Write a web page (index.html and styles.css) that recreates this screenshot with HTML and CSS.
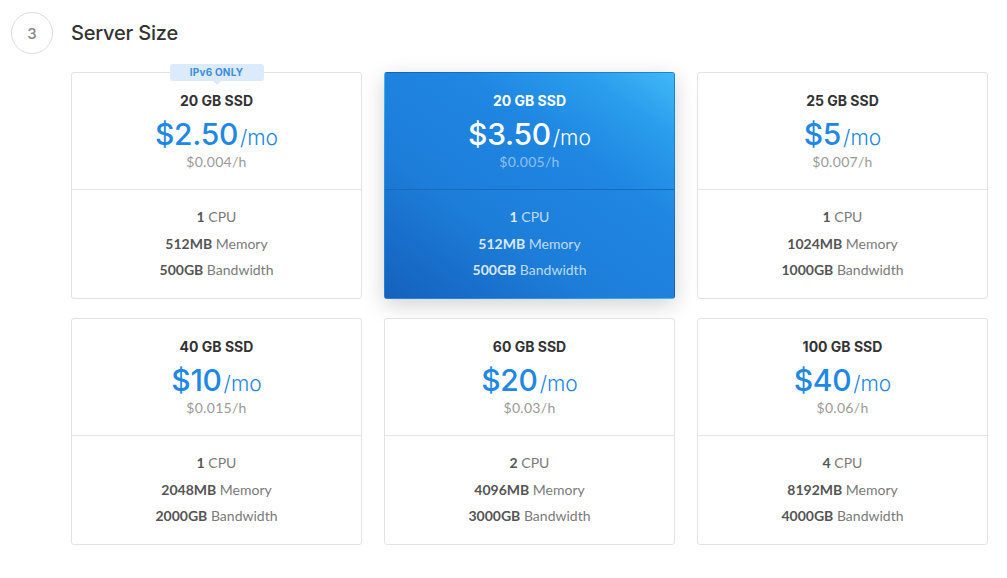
FILE: index.html
```html
<!DOCTYPE html>
<html>
<head>
<meta charset="utf-8">
<link rel="stylesheet" href="styles.css">
</head>
<body>
<section class="step">
  <header class="step-head">
    <div class="step-num">3</div>
    <h2 class="step-title">Server Size</h2>
  </header>
  <div class="plans">
    <div class="plan">
      <span class="badge">IPv6 ONLY</span>
      <div class="plan-top">
        <div class="plan-disk">20 GB SSD</div>
        <div class="plan-price"><span class="amt">$2.50</span><span class="per">/mo</span></div>
        <div class="plan-hour">$0.004/h</div>
      </div>
      <ul class="plan-specs">
        <li><b>1</b> CPU</li>
        <li><b>512MB</b> Memory</li>
        <li><b>500GB</b> Bandwidth</li>
      </ul>
    </div>
    <div class="plan selected">
      <div class="plan-top">
        <div class="plan-disk">20 GB SSD</div>
        <div class="plan-price"><span class="amt">$3.50</span><span class="per">/mo</span></div>
        <div class="plan-hour">$0.005/h</div>
      </div>
      <ul class="plan-specs">
        <li><b>1</b> CPU</li>
        <li><b>512MB</b> Memory</li>
        <li><b>500GB</b> Bandwidth</li>
      </ul>
    </div>
    <div class="plan">
      <div class="plan-top">
        <div class="plan-disk">25 GB SSD</div>
        <div class="plan-price"><span class="amt">$5</span><span class="per">/mo</span></div>
        <div class="plan-hour">$0.007/h</div>
      </div>
      <ul class="plan-specs">
        <li><b>1</b> CPU</li>
        <li><b>1024MB</b> Memory</li>
        <li><b>1000GB</b> Bandwidth</li>
      </ul>
    </div>
    <div class="plan">
      <div class="plan-top">
        <div class="plan-disk">40 GB SSD</div>
        <div class="plan-price"><span class="amt">$10</span><span class="per">/mo</span></div>
        <div class="plan-hour">$0.015/h</div>
      </div>
      <ul class="plan-specs">
        <li><b>1</b> CPU</li>
        <li><b>2048MB</b> Memory</li>
        <li><b>2000GB</b> Bandwidth</li>
      </ul>
    </div>
    <div class="plan">
      <div class="plan-top">
        <div class="plan-disk">60 GB SSD</div>
        <div class="plan-price"><span class="amt">$20</span><span class="per">/mo</span></div>
        <div class="plan-hour">$0.03/h</div>
      </div>
      <ul class="plan-specs">
        <li><b>2</b> CPU</li>
        <li><b>4096MB</b> Memory</li>
        <li><b>3000GB</b> Bandwidth</li>
      </ul>
    </div>
    <div class="plan">
      <div class="plan-top">
        <div class="plan-disk">100 GB SSD</div>
        <div class="plan-price"><span class="amt">$40</span><span class="per">/mo</span></div>
        <div class="plan-hour">$0.06/h</div>
      </div>
      <ul class="plan-specs">
        <li><b>4</b> CPU</li>
        <li><b>8192MB</b> Memory</li>
        <li><b>4000GB</b> Bandwidth</li>
      </ul>
    </div>
  </div>
</section>
</body>
</html>
```
FILE: styles.css
```css
* { box-sizing: border-box; }
html, body { margin: 0; padding: 0; background: #fff; }
body {
  font-family: "Lato", "Open Sans", sans-serif;
  color: #333;
}
.step { padding: 12px 19px 0 11px; }
.step-head {
  display: flex;
  align-items: center;
  gap: 18px;
  height: 42px;
}
.step-num {
  width: 42px;
  height: 42px;
  border: 1px solid #dcdcdc;
  border-radius: 50%;
  display: flex;
  align-items: center;
  justify-content: center;
  font-family: "Inter", "Lato", sans-serif;
  font-size: 15px;
  font-weight: 500;
  color: #888;
}
.step-title {
  margin: 0;
  font-family: "Inter", "Lato", sans-serif;
  font-size: 20px;
  font-weight: 500;
  color: #333;
  letter-spacing: -0.2px;
}
.plans {
  margin: 18px 0 0 60px;
  display: grid;
  grid-template-columns: repeat(3, 1fr);
  column-gap: 22px;
  row-gap: 19px;
}
.plan {
  position: relative;
  border: 1px solid #e3e3e3;
  border-radius: 3px;
  background: #fff;
  text-align: center;
  height: 227px;
  display: flex;
  flex-direction: column;
}
.badge {
  position: absolute;
  top: -9px;
  left: 50%;
  transform: translateX(-50%);
  background: #dcebfb;
  color: #3a8de0;
  font-family: "Inter", "Lato", sans-serif;
  font-size: 10px;
  font-weight: 700;
  letter-spacing: 0.2px;
  width: 94px;
  height: 17px;
  line-height: 17px;
  border-radius: 3px;
}
.badge::after {
  content: "";
  position: absolute;
  left: 50%;
  bottom: -4px;
  margin-left: -4px;
  border-left: 4px solid transparent;
  border-right: 4px solid transparent;
  border-top: 4px solid #dcebfb;
}
.plan-top {
  height: 117px;
  border-bottom: 1px solid #e6e6e6;
  padding-top: 18px;
}
.plan-disk {
  font-family: "Inter", "Lato", sans-serif;
  font-size: 14px;
  font-weight: 700;
  color: #333;
  line-height: 20px;
}
.plan-price {
  margin-top: 4px;
  line-height: 38px;
  color: #2088e4;
  font-family: "Inter", "Lato", sans-serif;
}
.plan-price .amt {
  font-size: 30px;
  font-weight: 500;
  letter-spacing: -0.3px;
}
.plan-price .per {
  font-size: 21px;
  font-weight: 300;
  margin-left: 2px;
}
.plan-hour {
  font-size: 14px;
  color: #9a9a9a;
  line-height: 16px;
  margin-top: -4px;
  letter-spacing: 0.3px;
}
.plan-specs {
  list-style: none;
  margin: 0;
  padding: 14px 0 0;
  font-size: 14px;
  color: #7a7a7a;
  line-height: 26.5px;
}
.plan-specs b {
  font-weight: 700;
  color: #555;
}
.plan.selected {
  border-color: transparent;
  background: linear-gradient(35deg, #1461bd 0%, #1d7ed9 35%, #1f86e2 65%, #2a9eec 85%, #41b8f8 100%);
  box-shadow: 0 6px 22px rgba(0, 0, 0, 0.18);
}
.plan.selected .plan-top { border-bottom-color: #1a68bf; }
.plan.selected .plan-disk,
.plan.selected .plan-price { color: #fff; }
.plan.selected .plan-hour { color: rgba(255, 255, 255, 0.5); }
.plan.selected .plan-specs { color: rgba(255, 255, 255, 0.72); }
.plan.selected .plan-specs b { color: rgba(255, 255, 255, 0.85); }
```
